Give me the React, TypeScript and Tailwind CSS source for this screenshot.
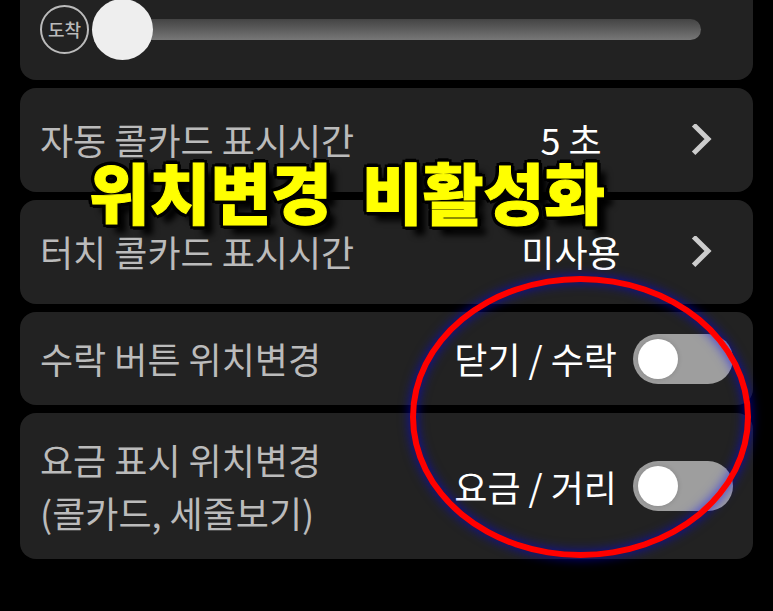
import React, { useState } from "react";

type PickerRowProps = {
  label: string;
  value: string;
};

type SwitchRowProps = {
  id: string;
  label: string;
  note?: string;
  value: string;
};

const ChevronIcon = () => (
  <svg
    className="h-8 w-[22px] shrink-0"
    viewBox="0 0 22 32"
    fill="none"
    stroke="#cccccc"
    strokeWidth="5"
    aria-hidden="true"
  >
    <path d="M2.6 0.8 L17 15 L2.6 29.2" />
  </svg>
);

const PickerRow: React.FC<PickerRowProps> = ({ label, value }) => (
  <button
    type="button"
    className="flex w-full items-center justify-between rounded-2xl bg-[#222222] pt-[25px] pr-10 pb-[26px] pl-5 text-left"
  >
    <span className="text-[#bbbbbb]">{label}</span>
    <span className="flex items-center gap-[68px]">
      <span className="w-[104px] text-center text-white">{value}</span>
      <ChevronIcon />
    </span>
  </button>
);

const SwitchRow: React.FC<SwitchRowProps> = ({ id, label, note, value }) => {
  const [checked, setChecked] = useState(false);

  return (
    <div className="flex items-center justify-between rounded-2xl bg-[#222222] p-5">
      <label htmlFor={id} className="text-[#bbbbbb]">
        {label}
        {note && <span className="block">{note}</span>}
      </label>
      <div className="flex items-center gap-4">
        <span className="text-white">{value}</span>
        <input
          id={id}
          type="checkbox"
          role="switch"
          checked={checked}
          onChange={(e) => setChecked(e.target.checked)}
          className="flex h-[50px] w-[100px] shrink-0 appearance-none items-center rounded-full bg-[#9e9e9e] px-[5px] before:size-10 before:rounded-full before:bg-white before:shadow-[0_0_5px_rgba(0,0,0,0.15)] before:content-[''] checked:justify-end checked:bg-blue-500"
        />
      </div>
    </div>
  );
};

const ArrivalSlider = () => {
  const [distance, setDistance] = useState(0);

  return (
    <div className="flex items-center gap-[3px] rounded-b-2xl bg-[#222222] pr-[52px] pb-[22px] pl-5">
      <label
        htmlFor="arrival"
        className="flex size-[49px] shrink-0 items-center justify-center rounded-full border-2 border-[#bbbbbb] text-lg font-medium text-[#bbbbbb]"
      >
        도착
      </label>
      <input
        id="arrival"
        type="range"
        min={0}
        max={100}
        value={distance}
        onChange={(e) => setDistance(Number(e.target.value))}
        className="h-[58px] min-w-0 flex-1 appearance-none bg-transparent [&::-webkit-slider-runnable-track]:h-[21px] [&::-webkit-slider-runnable-track]:rounded-full [&::-webkit-slider-runnable-track]:bg-linear-to-b [&::-webkit-slider-runnable-track]:from-[#444444] [&::-webkit-slider-runnable-track]:to-[#777777] [&::-webkit-slider-thumb]:-mt-5 [&::-webkit-slider-thumb]:size-[61px] [&::-webkit-slider-thumb]:appearance-none [&::-webkit-slider-thumb]:rounded-full [&::-webkit-slider-thumb]:bg-[#eeeeee]"
      />
    </div>
  );
};

const App = () => {
  return (
    <div className="relative min-h-screen overflow-hidden bg-black px-5 font-['Noto_Sans_CJK_KR',sans-serif] text-[36px] leading-[53px]">
      <main className="flex flex-col gap-2">
        <ArrivalSlider />
        <PickerRow label="자동 콜카드 표시시간" value="5 초" />
        <PickerRow label="터치 콜카드 표시시간" value="미사용" />
        <SwitchRow
          id="accept-position"
          label="수락 버튼 위치변경"
          value="닫기 / 수락"
        />
        <SwitchRow
          id="fare-position"
          label="요금 표시 위치변경"
          note="(콜카드, 세줄보기)"
          value="요금 / 거리"
        />
      </main>

      {/* caption and marker drawn over the settings */}
      <h1 className="pointer-events-none absolute top-[157px] left-[89px] text-[66px] leading-none font-black whitespace-pre text-[#ffff00] [-webkit-text-stroke:1px_#ffff00] [text-shadow:4px_0_#000000,-4px_0_#000000,0_4px_#000000,0_-4px_#000000,3px_3px_#000000,-3px_3px_#000000,3px_-3px_#000000,-3px_-3px_#000000,9px_9px_6px_#000000]">
        {"위치변경  비활성화"}
      </h1>
      <div className="pointer-events-none absolute top-[276px] right-[22px] h-[282px] w-[341px] rounded-[50%] border-[6px] border-[#ff0000] shadow-[0_0_11px_1px_rgba(0,0,255,0.55),inset_0_0_11px_1px_rgba(0,0,255,0.55)]" />
    </div>
  );
};

export default App;
